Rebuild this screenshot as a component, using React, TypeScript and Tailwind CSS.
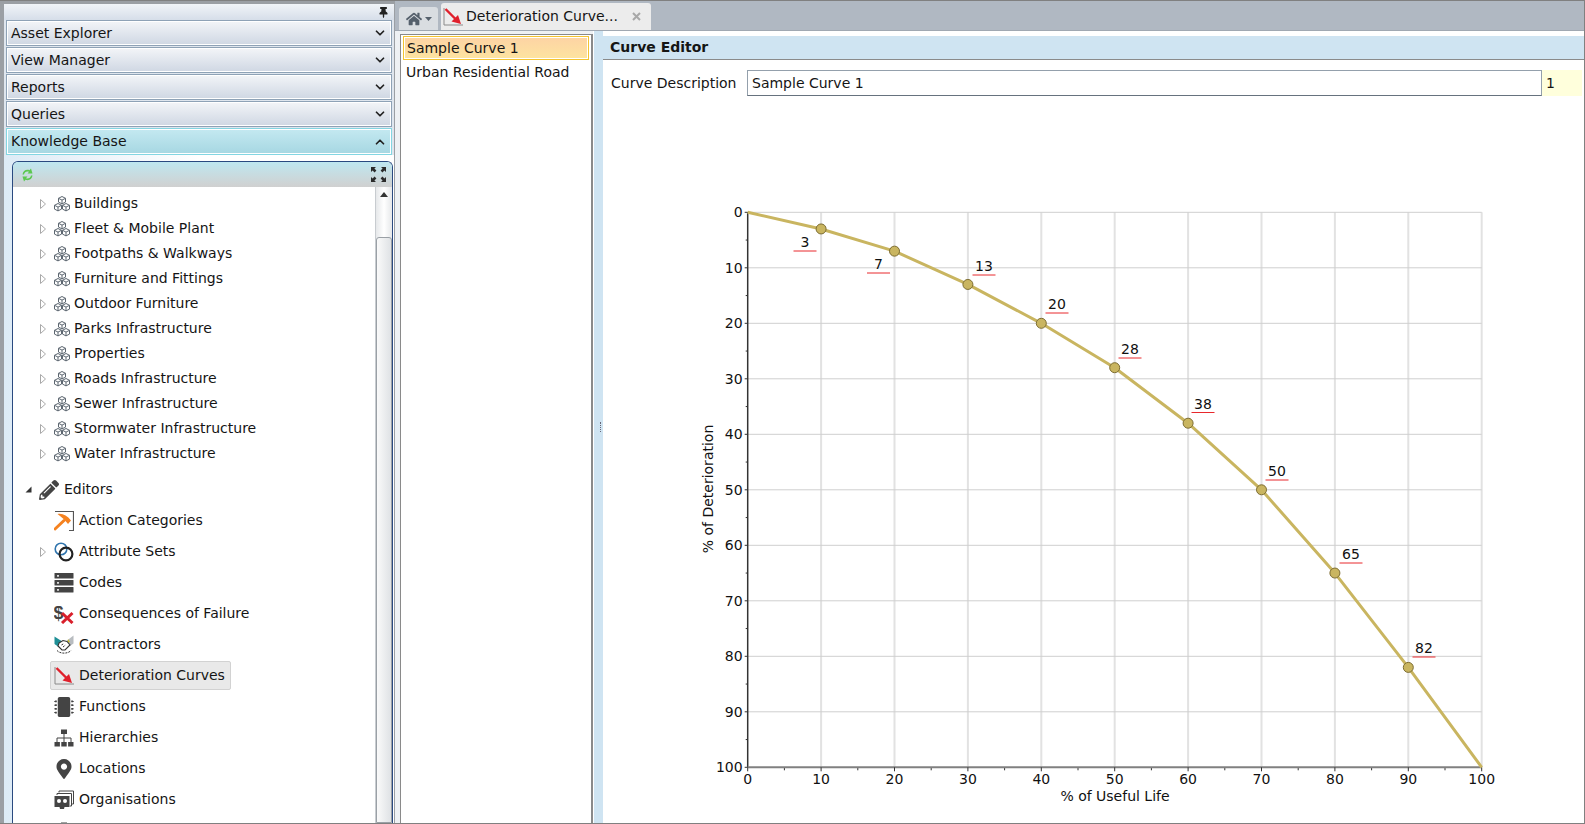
import { ChevronDown, ChevronUp } from "lucide-react"
import { FaHome, FaMapMarkerAlt, FaMicrochip, FaPencilAlt, FaThumbtack } from "react-icons/fa"

const assets = [
  "Buildings",
  "Fleet & Mobile Plant",
  "Footpaths & Walkways",
  "Furniture and Fittings",
  "Outdoor Furniture",
  "Parks Infrastructure",
  "Properties",
  "Roads Infrastructure",
  "Sewer Infrastructure",
  "Stormwater Infrastructure",
  "Water Infrastructure",
]

function Cubes() {
  const cube = (x: number, y: number) => (
    <g transform={`translate(${x} ${y})`} fill="#fff" stroke="#5c6670" strokeWidth="1">
      <path d="M3.5 0 L7 1.8 V5.6 L3.5 7.4 L0 5.6 V1.8 Z" />
      <path d="M0 1.8 L3.5 3.6 L7 1.8 M3.5 3.6 V7.4" fill="none" />
    </g>
  )
  return (
    <svg width="16" height="16" viewBox="0 0 16 16" className="shrink-0">
      {cube(4.5, 0.5)}
      {cube(0.5, 7.5)}
      {cube(8.5, 7.5)}
    </svg>
  )
}

function Expander() {
  return (
    <svg width="6" height="10" viewBox="0 0 6 10" className="shrink-0">
      <path d="M0.5 0.5 L5.5 5 L0.5 9.5 Z" fill="#fff" stroke="#a8a8a8" />
    </svg>
  )
}

function CurveIcon() {
  return (
    <svg width="20" height="20" viewBox="0 0 20 20" className="shrink-0">
      <path d="M1 1 V18 H20" fill="none" stroke="#8a8a8a" strokeWidth="1" />
      <path d="M2.5 2 L13 12.5" stroke="#e0202c" strokeWidth="2.4" />
      <path d="M8.5 14.5 L18 17 L15 8 Z" fill="#e0202c" />
    </svg>
  )
}

function HammerIcon() {
  return (
    <svg width="20" height="20" viewBox="0 0 20 20" className="shrink-0">
      <path d="M1 0.5 H19.5 V19.5 H15" fill="none" stroke="#555" strokeWidth="1.2" />
      <path d="M1 18 L10 9.5" stroke="#f58220" strokeWidth="3" strokeLinecap="round" />
      <path d="M3.5 3 C8 2 13 4 17 9.5 L14 13 C11 9 8 6.5 3.5 3 Z" fill="#f58220" />
    </svg>
  )
}

function RingsIcon() {
  return (
    <svg width="20" height="20" viewBox="0 0 20 20" className="shrink-0">
      <circle cx="7" cy="7" r="5.8" fill="none" stroke="#2f74ad" strokeWidth="1.6" />
      <circle cx="12" cy="12" r="6.4" fill="none" stroke="#222" strokeWidth="2.2" />
    </svg>
  )
}

function ServerIcon() {
  return (
    <svg width="20" height="20" viewBox="0 0 20 20" className="shrink-0">
      {[0, 7, 14].map((y) => (
        <g key={y}>
          <rect x="0.5" y={y} width="19" height="5.6" rx="0.6" fill="#444" />
          <rect x="3" y={y + 2.2} width="2" height="1.4" fill="#fff" />
        </g>
      ))}
    </svg>
  )
}

function DollarIcon() {
  return (
    <svg width="20" height="20" viewBox="0 0 20 20" className="shrink-0">
      <text x="-0.5" y="15" fontSize="18" fontWeight="700" fill="#444" fontFamily="'Liberation Sans', sans-serif">$</text>
      <path d="M8 9 L18.5 19 M18.5 9 L8 19" stroke="#d9202c" strokeWidth="3" />
    </svg>
  )
}

function HandshakeIcon() {
  return (
    <svg width="20" height="20" viewBox="0 0 20 20" className="shrink-0">
      <path d="M0.5 1.5 L7.5 6 L4 11.5 L0.5 9 Z" fill="#1f8f96" />
      <path d="M19.5 0.5 L13 5.5 L16 11 L19.5 8.5 Z" fill="#b8bcc0" />
      <path d="M14 4 L16 7 L13.5 8 Z" fill="#c8c030" />
      <path d="M5 8 L9 5.5 L13 6.5 L16 10 L11 15 L8 15 L4 11 Z" fill="#fff" stroke="#333" strokeWidth="1.1" />
      <path d="M7.5 10 L10 8.5 M9 12 L11.5 10 M3 15.5 C6 19 14 19 17 15.5" fill="none" stroke="#333" strokeWidth="1" strokeDasharray="2 1" />
    </svg>
  )
}

function HierarchyIcon() {
  return (
    <svg width="20" height="20" viewBox="0 0 20 20" className="shrink-0">
      <rect x="7" y="1.5" width="6" height="4.5" fill="#444" />
      <path d="M10 6 V10 M3 14 V10 H17 V14 M10 10 V14" fill="none" stroke="#444" strokeWidth="1" />
      <rect x="0.5" y="14" width="5.4" height="4.5" fill="#444" />
      <rect x="7.3" y="14" width="5.4" height="4.5" fill="#444" />
      <rect x="14.1" y="14" width="5.4" height="4.5" fill="#444" />
    </svg>
  )
}

function OrganisationsIcon() {
  return (
    <svg width="20" height="20" viewBox="0 0 20 20" className="shrink-0">
      <path d="M5 2.5 V1 H19.5 V14 H18 M3 5 V3.5 H17.5 V16 H16" fill="none" stroke="#444" strokeWidth="1" />
      <path d="M0.5 6 H15.5 V17 H10.5 L10 19 H6 L5.5 17 H0.5 Z" fill="#444" />
      <circle cx="5" cy="11" r="2" fill="#fff" />
      <circle cx="11" cy="11" r="2" fill="#fff" />
    </svg>
  )
}

const editors = [
  { label: "Action Categories", icon: <HammerIcon /> },
  { label: "Attribute Sets", icon: <RingsIcon />, expand: true },
  { label: "Codes", icon: <ServerIcon /> },
  { label: "Consequences of Failure", icon: <DollarIcon /> },
  { label: "Contractors", icon: <HandshakeIcon /> },
  { label: "Deterioration Curves", icon: <CurveIcon />, selected: true },
  { label: "Functions", icon: <FaMicrochip className="w-5 h-5 shrink-0 text-[#444]" /> },
  { label: "Hierarchies", icon: <HierarchyIcon /> },
  { label: "Locations", icon: <FaMapMarkerAlt className="w-5 h-5 shrink-0 text-[#444]" /> },
  { label: "Organisations", icon: <OrganisationsIcon /> },
  { label: "", icon: <HierarchyIcon /> },
]

function AccordionItem({ label, active }: { label: string; active?: boolean }) {
  return (
    <div
      className={
        active
          ? "h-[27px] flex items-center justify-between pl-[4px] pr-[4px] border border-[#83d6e2] shadow-[inset_0_0_0_1px_#fff] bg-gradient-to-b from-[#c4e9f1] to-[#a6d7e2]"
          : "h-[26px] mb-px flex items-center justify-between pl-[4px] pr-[4px] border border-[#8ea2b6] shadow-[inset_0_0_0_1px_#fff] bg-gradient-to-b from-[#f3f5f8] to-[#cfd7e3]"
      }
    >
      <span>{label}</span>
      {active ? (
        <ChevronUp className="w-[14px] h-[14px] text-[#222]" strokeWidth={3} />
      ) : (
        <ChevronDown className="w-[14px] h-[14px] text-[#222]" strokeWidth={3} />
      )}
    </div>
  )
}

function LeftPanel() {
  return (
    <div className="w-[395px] h-full shrink-0 flex flex-col border-l-[4px] border-t-[3px] border-r border-[#9b9fa4] bg-white overflow-hidden">
      <div className="h-[16px] shrink-0 flex items-center justify-end pr-[5px] bg-gradient-to-b from-[#f1f4f8] to-[#d6dee9]">
        <FaThumbtack className="w-[11px] h-[11px] text-[#222] rotate-[0deg]" />
      </div>
      <div className="px-[2px] bg-[#dfe6ee] shrink-0">
        <AccordionItem label="Asset Explorer" />
        <AccordionItem label="View Manager" />
        <AccordionItem label="Reports" />
        <AccordionItem label="Queries" />
        <AccordionItem label="Knowledge Base" active />
      </div>
      <div className="flex-1 min-h-0 pt-[6px] pl-[8px] pr-[1px] flex flex-col bg-gradient-to-r from-[#ddebf6] via-white to-white">
        <div className="flex-1 min-h-0 flex flex-col border-l border-r border-t border-[#2a4a80] rounded-t-[6px] overflow-hidden">
          <div className="h-[25px] shrink-0 flex items-center justify-between pl-[8px] pr-[6px] bg-gradient-to-b from-[#bee7f0] to-[#d0d0d0]">
            <svg width="13" height="14" viewBox="0 0 13 14">
              <path d="M1.5 6.5 C2 3 5 1 8.5 2.2 L10 0.5 L11.5 5.5 L6.5 5.5 L8 3.8 C5.5 3 3.5 4.2 3 6.5 Z" fill="#5cc850" />
              <path d="M11.5 7.5 C11 11 8 13 4.5 11.8 L3 13.5 L1.5 8.5 L6.5 8.5 L5 10.2 C7.5 11 9.5 9.8 10 7.5 Z" fill="#5cc850" />
            </svg>
            <svg width="15" height="15" viewBox="0 0 15 15" fill="#2b2b2b">
              <path d="M0 0 H5 L3.4 1.6 L5.4 3.6 L3.6 5.4 L1.6 3.4 L0 5 Z" />
              <path d="M15 0 H10 L11.6 1.6 L9.6 3.6 L11.4 5.4 L13.4 3.4 L15 5 Z" />
              <path d="M0 15 H5 L3.4 13.4 L5.4 11.4 L3.6 9.6 L1.6 11.6 L0 10 Z" />
              <path d="M15 15 H10 L11.6 13.4 L9.6 11.4 L11.4 9.6 L13.4 11.6 L15 10 Z" />
            </svg>
          </div>
          <div className="flex-1 min-h-0 flex">
            <div className="flex-1 min-w-0 pt-[4px] overflow-hidden bg-white">
              {assets.map((a) => (
                <div key={a} className="h-[25px] flex items-center pl-[27px]">
                  <div className="w-[14px] shrink-0">
                    <Expander />
                  </div>
                  <Cubes />
                  <span className="ml-[4px] whitespace-nowrap">{a}</span>
                </div>
              ))}
              <div className="mt-[8px] h-[31px] flex items-center pl-[12px]">
                <svg width="7" height="7" viewBox="0 0 7 7" className="shrink-0">
                  <path d="M6.5 0.5 V6.5 H0.5 Z" fill="#333" />
                </svg>
                <FaPencilAlt className="ml-[7px] w-5 h-5 shrink-0 text-[#444]" />
                <span className="ml-[5px]">Editors</span>
              </div>
              {editors.map((e) => (
                <div key={e.label} className="h-[31px] flex items-center pl-[27px]">
                  <div className="w-[14px] shrink-0">{e.expand && <Expander />}</div>
                  {e.selected ? (
                    <div className="-ml-[4px] w-[181px] h-[29px] pl-[3px] flex items-center bg-[#e9e9e9] border border-[#d2d2d2] rounded-[2px]">
                      {e.icon}
                      <span className="ml-[5px] whitespace-nowrap">{e.label}</span>
                    </div>
                  ) : (
                    <>
                      {e.icon}
                      <span className="ml-[5px] whitespace-nowrap">{e.label}</span>
                    </>
                  )}
                </div>
              ))}
            </div>
            <div className="w-[17px] shrink-0 flex flex-col items-stretch border-l border-[#c8ccd0] bg-gradient-to-r from-[#e6e8ea] via-white to-[#e6e8ea]">
              <div className="h-[50px] pt-[5px] flex justify-center">
                <svg width="8" height="5" viewBox="0 0 8 5">
                  <path d="M0 5 L4 0 L8 5 Z" fill="#333" />
                </svg>
              </div>
              <div className="flex-1 border border-[#9aa0a6] rounded-t-[3px] bg-gradient-to-r from-[#fafafa] to-[#dfe2e5]" />
            </div>
          </div>
        </div>
      </div>
    </div>
  )
}

function TabStrip() {
  return (
    <div className="h-[30px] shrink-0 flex items-end pl-[4px] gap-[3px] bg-[#b0b8c2] border-b border-[#a0a8b2]">
      <div className="w-[39px] h-[23px] flex items-center justify-center gap-[3px] rounded-t-[3px] bg-[#d9dde1]">
        <FaHome className="w-[16px] h-[16px] text-[#55606c]" />
        <svg width="7" height="4" viewBox="0 0 7 4">
          <path d="M0 0 H7 L3.5 4 Z" fill="#55606c" />
        </svg>
      </div>
      <div className="w-[210px] h-[27px] flex items-center pl-[2px] pr-[10px] rounded-t-[3px] bg-[#ececec]">
        <CurveIcon />
        <span className="ml-[3px] whitespace-nowrap">Deterioration Curve...</span>
        <svg width="9" height="9" viewBox="0 0 9 9" className="ml-auto">
          <path d="M1 1 L8 8 M8 1 L1 8" stroke="#a8a8a8" strokeWidth="2" />
        </svg>
      </div>
    </div>
  )
}

function CurveList() {
  return (
    <div className="w-[198px] shrink-0 pt-[3px] pl-[5px] bg-[#eef1f4] flex">
      <div className="flex-1 px-[2px] pt-[1px] bg-white border-l border-r-2 border-t border-[#8a8a8a]">
        <div className="h-[24px] flex items-center pl-[3px] border border-[#f4c430] shadow-[inset_0_0_0_1px_#fff] bg-gradient-to-b from-[#fdd3a4] to-[#fde4a0]">
          Sample Curve 1
        </div>
        <div className="h-[24px] flex items-center pl-[3px]">Urban Residential Road</div>
      </div>
    </div>
  )
}

const points = [0, 3, 7, 13, 20, 28, 38, 50, 65, 82, 100]
const px = (v: number) => 747.7 + v * 7.34
const py = (v: number) => 212.3 + v * 5.55

const labels = [
  { t: "3", x: 805, y: 242 },
  { t: "7", x: 878.5, y: 264 },
  { t: "13", x: 984, y: 266 },
  { t: "20", x: 1057, y: 304 },
  { t: "28", x: 1130, y: 349 },
  { t: "38", x: 1203, y: 403.5 },
  { t: "50", x: 1277, y: 471 },
  { t: "65", x: 1351, y: 554 },
  { t: "82", x: 1424, y: 648 },
]

const tens = [0, 10, 20, 30, 40, 50, 60, 70, 80, 90, 100]
const fives = [5, 15, 25, 35, 45, 55, 65, 75, 85, 95]

function Chart() {
  return (
    <svg width="820" height="632" viewBox="680 190 820 632" className="block" fontSize="14" fill="#111">
      {tens.slice(1, 10).map((v) => (
        <line key={v} x1={px(v)} x2={px(v)} y1={py(0)} y2={py(100)} stroke="#e2e2e2" strokeWidth="2" />
      ))}
      <line x1={px(100)} x2={px(100)} y1={py(0)} y2={py(100)} stroke="#e2e2e2" strokeWidth="2" />
      {tens.slice(0, 10).map((v) => (
        <line key={v} x1={px(0)} x2={px(100)} y1={py(v)} y2={py(v)} stroke="#cfcfcf" strokeWidth="1" />
      ))}
      {fives.map((v) => (
        <g key={v}>
          <line x1={px(0) - 2} x2={px(0)} y1={py(v)} y2={py(v)} stroke="#333" />
          <line x1={px(v)} x2={px(v)} y1={py(100)} y2={py(100) + 3} stroke="#333" />
        </g>
      ))}
      <line x1={px(0)} x2={px(0)} y1={py(0)} y2={py(100)} stroke="#333" strokeWidth="1.5" />
      <line x1={px(0)} x2={px(100)} y1={py(100)} y2={py(100)} stroke="#808080" strokeWidth="2" />
      {tens.map((v) => (
        <g key={v}>
          <line x1={px(0) - 3} x2={px(0)} y1={py(v)} y2={py(v)} stroke="#333" />
          <line x1={px(v)} x2={px(v)} y1={py(100)} y2={py(100) + 4} stroke="#333" />
          <text x={px(0) - 5} y={py(v) + 5} textAnchor="end">{v}</text>
          <text x={px(v)} y={py(100) + 17} textAnchor="middle">{v}</text>
        </g>
      ))}
      <polyline
        points={points.map((v, i) => `${px(i * 10)},${py(v)}`).join(" ")}
        fill="none"
        stroke="#c9b560"
        strokeWidth="3"
        strokeLinejoin="round"
      />
      {points.slice(1, 10).map((v, i) => (
        <circle key={v} cx={px((i + 1) * 10)} cy={py(v)} r="5" fill="#c9b560" stroke="#7d6d32" strokeWidth="1" />
      ))}
      {labels.map((l) => (
        <g key={l.t}>
          <text x={l.x} y={l.y + 5} textAnchor="middle">{l.t}</text>
          <line x1={l.x - 11.5} x2={l.x + 11.5} y1={l.y + 9} y2={l.y + 9} stroke="#e8282c" strokeWidth="1" />
        </g>
      ))}
      <text x="1115" y="801" textAnchor="middle">% of Useful Life</text>
      <text x="713" y="489" textAnchor="middle" transform="rotate(-90 713 489)">% of Deterioration</text>
    </svg>
  )
}

function CurveEditor() {
  return (
    <div className="flex-1 min-w-0 flex flex-col bg-white pt-[5px]">
      <div className="h-[24px] shrink-0 flex items-center pl-[7px] font-bold bg-[#cfe4f2] border-b border-[#8a8a8a]">
        Curve Editor
      </div>
      <div className="mt-[10px] h-[26px] shrink-0 flex items-center pl-[8px] pr-[2px]">
        <span className="w-[136px] shrink-0 whitespace-nowrap">Curve Description</span>
        <div className="flex-1 h-full flex items-center pl-[4px] border border-[#94a0ac] border-b-[#66727e] bg-white">
          Sample Curve 1
        </div>
        <div className="w-[40px] h-full flex items-center pl-[4px] bg-[#ffffdc]">1</div>
      </div>
      <div className="ml-[77px] mt-[94px]">
        <Chart />
      </div>
    </div>
  )
}

export default function App() {
  return (
    <div className="w-[1585px] h-[824px] flex overflow-hidden bg-white border-t border-r border-b border-[#808080] text-[14px] text-[#151515] font-['DejaVu_Sans',sans-serif]">
      <LeftPanel />
      <div className="flex-1 min-w-0 h-full flex flex-col">
        <TabStrip />
        <div className="flex-1 min-h-0 flex">
          <CurveList />
          <div className="w-[10px] shrink-0 flex items-center justify-end pr-[1px] border-l border-white bg-[#cfe4f2]">
            <div className="w-[2px] h-[10px] border-l border-dotted border-[#667]" />
          </div>
          <CurveEditor />
        </div>
      </div>
    </div>
  )
}
